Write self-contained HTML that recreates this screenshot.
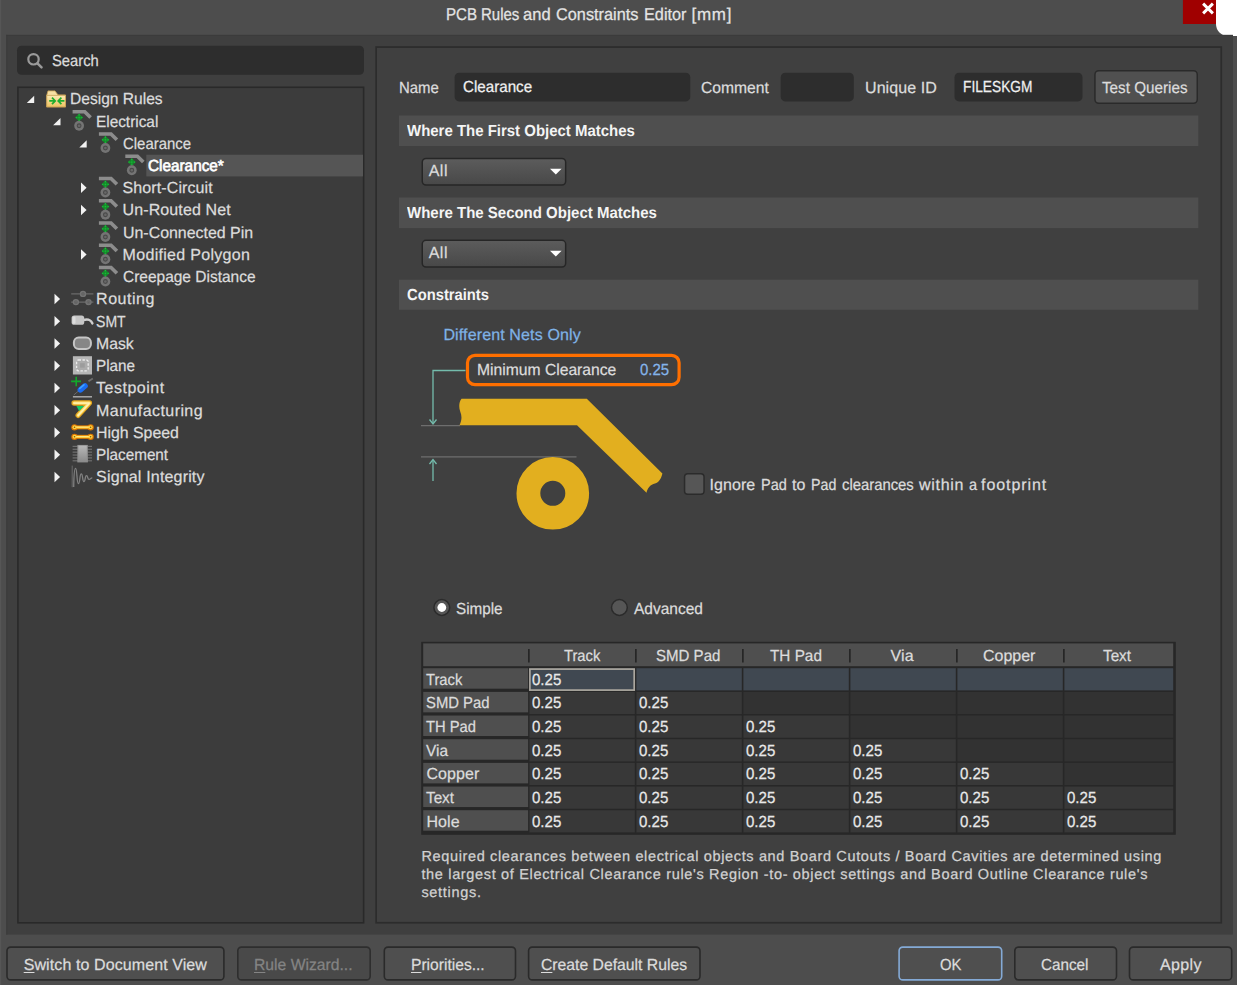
<!DOCTYPE html>
<html><head><meta charset="utf-8"><title>PCB Rules and Constraints Editor [mm]</title>
<style>
html,body{margin:0;padding:0}
body{width:1237px;height:985px;position:relative;overflow:hidden;background:#4d4d4d;font-family:"Liberation Sans",sans-serif;}
.a{position:absolute;box-sizing:border-box}
.t{position:absolute;transform-origin:0 0;line-height:20px;white-space:pre;text-rendering:geometricPrecision;-webkit-text-stroke:0.25px currentColor;}
.t u{text-decoration:underline;text-underline-offset:2px;text-decoration-thickness:1px}
.inp{background:#2d2d2d;border-radius:4px}
.sec{background:#4f4f4f;left:399px;width:799px}
.btn{background:#4f4f4f;border:1px solid #2a2a2a;border-radius:4px;top:946px;height:35px}
.dd{border:1px solid #262626;border-radius:4px;background:linear-gradient(#5b5b5b,#494949);left:421px;width:146px;height:29px}
.ar{width:0;height:0;border-left:6px solid transparent;border-right:6px solid transparent;border-top:6px solid #fff}
.tri{width:0;height:0;border-left:8px solid transparent;border-bottom:8px solid #f0f0f0}
.arr{width:0;height:0;border-top:5px solid transparent;border-bottom:5px solid transparent;border-left:6px solid #f0f0f0}
svg{position:absolute;overflow:visible}

</style></head>
<body>
<svg style="left:0;top:0" width="1237" height="985" viewBox="0 0 1237 985">
<defs><linearGradient id="ddg" x1="0" y1="0" x2="0" y2="1"><stop offset="0" stop-color="#5c5c5c"/><stop offset="1" stop-color="#484848"/></linearGradient></defs>
<rect x="0.00" y="0.00" width="1.20" height="985.00" rx="0.00" fill="#565656"/>
<rect x="1182.90" y="0.00" width="33.10" height="24.00" rx="0.00" fill="#a00000"/>
<path d="M1203.1 3.6 L1212.9 13.4 M1212.9 3.6 L1203.1 13.4" stroke="#fff" stroke-width="2.9" stroke-linecap="butt" fill="none"/>
<path d="M1216 0 H1237 V36 H1228 A12 12 0 0 1 1216 24 Z" fill="#fff"/>
<rect x="6.30" y="34.90" width="1226.60" height="899.70" rx="0.00" fill="#3f3f3f"/>
<rect x="6.30" y="34.90" width="1226.60" height="1.10" rx="0.00" fill="#3b3b3b"/>
<rect x="6.30" y="34.90" width="1.00" height="899.70" rx="0.00" fill="#3b3b3b"/>
<rect x="17.00" y="45.80" width="347.00" height="28.90" rx="4.50" fill="#2d2d2d"/>
<circle cx="33.5" cy="59.3" r="5.2" fill="none" stroke="#9a9a9a" stroke-width="2.2"/><path d="M37.5 63.3 L41.5 67.4" stroke="#9a9a9a" stroke-width="2.5" stroke-linecap="round"/>
<rect x="17.90" y="87.30" width="345.70" height="835.50" rx="0.00" fill="#3c3c3c" stroke="#292929" stroke-width="1.60"/>
<rect x="146.30" y="154.70" width="216.70" height="21.70" rx="0.00" fill="#555555"/>
<rect x="376.15" y="47.05" width="845.10" height="875.70" rx="0.00" fill="#404040" stroke="#2c2c2c" stroke-width="1.70"/>
<rect x="454.60" y="72.70" width="235.70" height="28.70" rx="4.50" fill="#2d2d2d"/>
<rect x="780.70" y="72.70" width="73.10" height="28.70" rx="4.50" fill="#2d2d2d"/>
<rect x="954.50" y="72.70" width="128.00" height="28.70" rx="4.50" fill="#2d2d2d"/>
<rect x="1094.95" y="70.75" width="102.30" height="32.60" rx="3.75" fill="#505050" stroke="#2a2a2a" stroke-width="1.50"/>
<rect x="399.00" y="115.50" width="799.30" height="30.50" rx="0.00" fill="#4f4f4f"/>
<rect x="399.00" y="197.50" width="799.30" height="30.60" rx="0.00" fill="#4f4f4f"/>
<rect x="399.00" y="279.70" width="799.30" height="30.10" rx="0.00" fill="#4f4f4f"/>
<rect x="422.25" y="158.45" width="143.40" height="26.50" rx="3.75" fill="url(#ddg)" stroke="#262626" stroke-width="1.50"/>
<path d="M550.0 168.70 H561.6 L555.8 174.60 Z" fill="#ffffff"/>
<rect x="422.25" y="240.35" width="143.40" height="26.60" rx="3.75" fill="url(#ddg)" stroke="#262626" stroke-width="1.50"/>
<path d="M550.0 250.65 H561.6 L555.8 256.55 Z" fill="#ffffff"/>
<rect x="684.55" y="473.65" width="19.50" height="20.60" rx="3.25" fill="#565656" stroke="#2b2b2b" stroke-width="1.50"/>
<circle cx="441.80" cy="607.5" r="7.9" fill="#565656" stroke="#2b2b2b" stroke-width="1.5"/>
<circle cx="619.40" cy="607.5" r="7.9" fill="#565656" stroke="#2b2b2b" stroke-width="1.5"/>
<circle cx="441.8" cy="607.5" r="4.4" fill="#ffffff"/>
<rect x="7.00" y="947.10" width="216.90" height="32.80" rx="3.70" fill="#4f4f4f" stroke="#2a2a2a" stroke-width="1.60"/>
<rect x="237.80" y="947.10" width="132.40" height="32.80" rx="3.70" fill="#494949" stroke="#2e2e2e" stroke-width="1.60"/>
<rect x="384.30" y="947.10" width="131.20" height="32.80" rx="3.70" fill="#4f4f4f" stroke="#2a2a2a" stroke-width="1.60"/>
<rect x="528.60" y="947.10" width="171.40" height="32.80" rx="3.70" fill="#4f4f4f" stroke="#2a2a2a" stroke-width="1.60"/>
<rect x="899.10" y="947.10" width="102.60" height="32.80" rx="3.70" fill="#4f4f4f" stroke="#84aad6" stroke-width="1.60"/>
<rect x="1014.80" y="947.10" width="101.70" height="32.80" rx="3.70" fill="#4f4f4f" stroke="#2a2a2a" stroke-width="1.60"/>
<rect x="1129.50" y="947.10" width="102.20" height="32.80" rx="3.70" fill="#4f4f4f" stroke="#2a2a2a" stroke-width="1.60"/>
</svg>
<!-- diagram -->
<svg style="left:0;top:0" width="1237" height="985" viewBox="0 0 1237 985">
 <g fill="none" stroke="#74bcac" stroke-width="1.3">
  <path d="M465.5 370.5 H433 V423"/>
  <path d="M429.5 419.5 L433 424 L436.5 419.5"/>
  <path d="M433 481 V460"/>
  <path d="M429.5 464 L433 459.5 L436.5 464"/>
 </g>
 <g stroke="#6e6e6e" stroke-width="1.2">
  <path d="M421 425.6 H460"/>
  <path d="M421 456.8 H576.5"/>
 </g>
 <path d="M461.5 398.8 H586.8 L662.4 473.6 C 661 479 659 482.5 655 483.5 C 650.5 484.5 647.5 488 646.5 492.8 L577 425.3 H459.5 C 462 420 462 416 460.2 411.5 C 458.6 407 459 402 461.5 398.8 Z" fill="#e2af1f"/>
 <circle cx="552.8" cy="493.3" r="24.4" fill="none" stroke="#e2af1f" stroke-width="23.8"/>
 <rect x="467.5" y="355.3" width="211.6" height="29.4" rx="7.5" fill="none" stroke="#ff6f00" stroke-width="3.2"/>
</svg>
<svg style="left:0;top:0" width="1237" height="985" viewBox="0 0 1237 985">
<rect x="421.20" y="641.80" width="754.60" height="193.00" fill="#272727"/>
<rect x="423.20" y="643.40" width="750.00" height="22.80" fill="#4f4f4f"/>
<rect x="528.00" y="649.00" width="1.70" height="13.50" fill="#262626"/>
<rect x="635.00" y="649.00" width="1.70" height="13.50" fill="#262626"/>
<rect x="742.00" y="649.00" width="1.70" height="13.50" fill="#262626"/>
<rect x="849.00" y="649.00" width="1.70" height="13.50" fill="#262626"/>
<rect x="956.00" y="649.00" width="1.70" height="13.50" fill="#262626"/>
<rect x="1063.00" y="649.00" width="1.70" height="13.50" fill="#262626"/>
<rect x="423.20" y="668.20" width="104.90" height="20.50" fill="#4f4f4f"/>
<rect x="529.40" y="668.20" width="105.40" height="22.20" fill="#404851"/>
<rect x="636.40" y="668.20" width="105.40" height="22.20" fill="#404851"/>
<rect x="743.40" y="668.20" width="105.40" height="22.20" fill="#404851"/>
<rect x="850.40" y="668.20" width="105.40" height="22.20" fill="#404851"/>
<rect x="957.40" y="668.20" width="105.40" height="22.20" fill="#404851"/>
<rect x="1064.40" y="668.20" width="108.80" height="22.20" fill="#404851"/>
<rect x="423.20" y="691.87" width="104.90" height="20.50" fill="#4f4f4f"/>
<rect x="529.40" y="691.87" width="105.40" height="22.20" fill="#383838"/>
<rect x="636.40" y="691.87" width="105.40" height="22.20" fill="#383838"/>
<rect x="743.40" y="691.87" width="105.40" height="22.20" fill="#323232"/>
<rect x="850.40" y="691.87" width="105.40" height="22.20" fill="#323232"/>
<rect x="957.40" y="691.87" width="105.40" height="22.20" fill="#323232"/>
<rect x="1064.40" y="691.87" width="108.80" height="22.20" fill="#323232"/>
<rect x="423.20" y="715.54" width="104.90" height="20.50" fill="#4f4f4f"/>
<rect x="529.40" y="715.54" width="105.40" height="22.20" fill="#383838"/>
<rect x="636.40" y="715.54" width="105.40" height="22.20" fill="#383838"/>
<rect x="743.40" y="715.54" width="105.40" height="22.20" fill="#383838"/>
<rect x="850.40" y="715.54" width="105.40" height="22.20" fill="#323232"/>
<rect x="957.40" y="715.54" width="105.40" height="22.20" fill="#323232"/>
<rect x="1064.40" y="715.54" width="108.80" height="22.20" fill="#323232"/>
<rect x="423.20" y="739.21" width="104.90" height="20.50" fill="#4f4f4f"/>
<rect x="529.40" y="739.21" width="105.40" height="22.20" fill="#383838"/>
<rect x="636.40" y="739.21" width="105.40" height="22.20" fill="#383838"/>
<rect x="743.40" y="739.21" width="105.40" height="22.20" fill="#383838"/>
<rect x="850.40" y="739.21" width="105.40" height="22.20" fill="#383838"/>
<rect x="957.40" y="739.21" width="105.40" height="22.20" fill="#323232"/>
<rect x="1064.40" y="739.21" width="108.80" height="22.20" fill="#323232"/>
<rect x="423.20" y="762.88" width="104.90" height="20.50" fill="#4f4f4f"/>
<rect x="529.40" y="762.88" width="105.40" height="22.20" fill="#383838"/>
<rect x="636.40" y="762.88" width="105.40" height="22.20" fill="#383838"/>
<rect x="743.40" y="762.88" width="105.40" height="22.20" fill="#383838"/>
<rect x="850.40" y="762.88" width="105.40" height="22.20" fill="#383838"/>
<rect x="957.40" y="762.88" width="105.40" height="22.20" fill="#383838"/>
<rect x="1064.40" y="762.88" width="108.80" height="22.20" fill="#323232"/>
<rect x="423.20" y="786.55" width="104.90" height="20.50" fill="#4f4f4f"/>
<rect x="529.40" y="786.55" width="105.40" height="22.20" fill="#383838"/>
<rect x="636.40" y="786.55" width="105.40" height="22.20" fill="#383838"/>
<rect x="743.40" y="786.55" width="105.40" height="22.20" fill="#383838"/>
<rect x="850.40" y="786.55" width="105.40" height="22.20" fill="#383838"/>
<rect x="957.40" y="786.55" width="105.40" height="22.20" fill="#383838"/>
<rect x="1064.40" y="786.55" width="108.80" height="22.20" fill="#383838"/>
<rect x="423.20" y="810.22" width="104.90" height="20.50" fill="#4f4f4f"/>
<rect x="529.40" y="810.22" width="105.40" height="22.20" fill="#383838"/>
<rect x="636.40" y="810.22" width="105.40" height="22.20" fill="#383838"/>
<rect x="743.40" y="810.22" width="105.40" height="22.20" fill="#383838"/>
<rect x="850.40" y="810.22" width="105.40" height="22.20" fill="#383838"/>
<rect x="957.40" y="810.22" width="105.40" height="22.20" fill="#383838"/>
<rect x="1064.40" y="810.22" width="108.80" height="22.20" fill="#383838"/>
<rect x="529.9" y="669.10" width="104.3" height="21" fill="none" stroke="#aba79f" stroke-width="1.7"/>
</svg>
<svg style="left:0;top:0" width="1237" height="985" viewBox="0 0 1237 985">
<path d="M26.80 103.10 H34.20 V95.70 Z" fill="#f2f2f2"/>
<defs><linearGradient id="fg" x1="0" y1="0" x2="0" y2="1"><stop offset="0" stop-color="#fbe9b4"/><stop offset="1" stop-color="#eec462"/></linearGradient></defs><path d="M46.80 95.10 L48.00 90.90 H55.00 L58.00 94.90 H65.40 V106.90 H46.80 Z" fill="#f6dfa4" stroke="#caa256" stroke-width="0.8"/><rect x="46.80" y="95.30" width="18.6" height="11.6" fill="url(#fg)" stroke="#caa256" stroke-width="0.8"/><path d="M49.20 100.90 H55.00 M52.00 97.70 L55.20 100.90 L52.00 104.10" fill="none" stroke="#1fae2e" stroke-width="1.7"/><path d="M64.40 100.90 H58.40 M61.40 97.70 L58.20 100.90 L61.40 104.10" fill="none" stroke="#1fae2e" stroke-width="1.7"/>
<path d="M53.10 125.35 H60.50 V117.95 Z" fill="#f2f2f2"/>
<path d="M72.60 111.75 H84.70 L90.60 117.55" fill="none" stroke="#8c8c8c" stroke-width="3.7" stroke-linejoin="miter"/><path d="M75.20 117.55 L79.10 113.65 L83.00 117.55 L79.10 121.45 Z" fill="#17922d"/><circle cx="76.30" cy="117.55" r="0.65" fill="#14c83a"/><circle cx="81.90" cy="117.55" r="0.65" fill="#14c83a"/><circle cx="79.10" cy="114.75" r="0.65" fill="#14c83a"/><circle cx="79.10" cy="120.35" r="0.65" fill="#14c83a"/><circle cx="79.10" cy="117.55" r="0.65" fill="#14c83a"/><circle cx="77.70" cy="116.15" r="0.5" fill="#0f7a24"/><circle cx="80.50" cy="116.15" r="0.5" fill="#0f7a24"/><circle cx="77.70" cy="118.95" r="0.5" fill="#0f7a24"/><circle cx="80.50" cy="118.95" r="0.5" fill="#0f7a24"/><circle cx="79.10" cy="125.75" r="4.9" fill="#747474"/><circle cx="79.10" cy="125.75" r="1.9" fill="#686868" stroke="#4a4a4a" stroke-width="1.1"/>
<path d="M79.30 147.60 H86.70 V140.20 Z" fill="#f2f2f2"/>
<path d="M98.90 134.00 H111.00 L116.90 139.80" fill="none" stroke="#8c8c8c" stroke-width="3.7" stroke-linejoin="miter"/><path d="M101.50 139.80 L105.40 135.90 L109.30 139.80 L105.40 143.70 Z" fill="#17922d"/><circle cx="102.60" cy="139.80" r="0.65" fill="#14c83a"/><circle cx="108.20" cy="139.80" r="0.65" fill="#14c83a"/><circle cx="105.40" cy="137.00" r="0.65" fill="#14c83a"/><circle cx="105.40" cy="142.60" r="0.65" fill="#14c83a"/><circle cx="105.40" cy="139.80" r="0.65" fill="#14c83a"/><circle cx="104.00" cy="138.40" r="0.5" fill="#0f7a24"/><circle cx="106.80" cy="138.40" r="0.5" fill="#0f7a24"/><circle cx="104.00" cy="141.20" r="0.5" fill="#0f7a24"/><circle cx="106.80" cy="141.20" r="0.5" fill="#0f7a24"/><circle cx="105.40" cy="148.00" r="4.9" fill="#747474"/><circle cx="105.40" cy="148.00" r="1.9" fill="#686868" stroke="#4a4a4a" stroke-width="1.1"/>
<path d="M125.30 156.25 H137.40 L143.30 162.05" fill="none" stroke="#8c8c8c" stroke-width="3.7" stroke-linejoin="miter"/><path d="M127.90 162.05 L131.80 158.15 L135.70 162.05 L131.80 165.95 Z" fill="#17922d"/><circle cx="129.00" cy="162.05" r="0.65" fill="#14c83a"/><circle cx="134.60" cy="162.05" r="0.65" fill="#14c83a"/><circle cx="131.80" cy="159.25" r="0.65" fill="#14c83a"/><circle cx="131.80" cy="164.85" r="0.65" fill="#14c83a"/><circle cx="131.80" cy="162.05" r="0.65" fill="#14c83a"/><circle cx="130.40" cy="160.65" r="0.5" fill="#0f7a24"/><circle cx="133.20" cy="160.65" r="0.5" fill="#0f7a24"/><circle cx="130.40" cy="163.45" r="0.5" fill="#0f7a24"/><circle cx="133.20" cy="163.45" r="0.5" fill="#0f7a24"/><circle cx="131.80" cy="170.25" r="4.9" fill="#747474"/><circle cx="131.80" cy="170.25" r="1.9" fill="#686868" stroke="#4a4a4a" stroke-width="1.1"/>
<path d="M81.00 182.60 L86.60 187.80 L81.00 193.00 Z" fill="#f2f2f2"/>
<path d="M98.90 178.50 H111.00 L116.90 184.30" fill="none" stroke="#8c8c8c" stroke-width="3.7" stroke-linejoin="miter"/><path d="M101.50 184.30 L105.40 180.40 L109.30 184.30 L105.40 188.20 Z" fill="#17922d"/><circle cx="102.60" cy="184.30" r="0.65" fill="#14c83a"/><circle cx="108.20" cy="184.30" r="0.65" fill="#14c83a"/><circle cx="105.40" cy="181.50" r="0.65" fill="#14c83a"/><circle cx="105.40" cy="187.10" r="0.65" fill="#14c83a"/><circle cx="105.40" cy="184.30" r="0.65" fill="#14c83a"/><circle cx="104.00" cy="182.90" r="0.5" fill="#0f7a24"/><circle cx="106.80" cy="182.90" r="0.5" fill="#0f7a24"/><circle cx="104.00" cy="185.70" r="0.5" fill="#0f7a24"/><circle cx="106.80" cy="185.70" r="0.5" fill="#0f7a24"/><circle cx="105.40" cy="192.50" r="4.9" fill="#747474"/><circle cx="105.40" cy="192.50" r="1.9" fill="#686868" stroke="#4a4a4a" stroke-width="1.1"/>
<path d="M81.00 204.85 L86.60 210.05 L81.00 215.25 Z" fill="#f2f2f2"/>
<path d="M98.90 200.75 H111.00 L116.90 206.55" fill="none" stroke="#8c8c8c" stroke-width="3.7" stroke-linejoin="miter"/><path d="M101.50 206.55 L105.40 202.65 L109.30 206.55 L105.40 210.45 Z" fill="#17922d"/><circle cx="102.60" cy="206.55" r="0.65" fill="#14c83a"/><circle cx="108.20" cy="206.55" r="0.65" fill="#14c83a"/><circle cx="105.40" cy="203.75" r="0.65" fill="#14c83a"/><circle cx="105.40" cy="209.35" r="0.65" fill="#14c83a"/><circle cx="105.40" cy="206.55" r="0.65" fill="#14c83a"/><circle cx="104.00" cy="205.15" r="0.5" fill="#0f7a24"/><circle cx="106.80" cy="205.15" r="0.5" fill="#0f7a24"/><circle cx="104.00" cy="207.95" r="0.5" fill="#0f7a24"/><circle cx="106.80" cy="207.95" r="0.5" fill="#0f7a24"/><circle cx="105.40" cy="214.75" r="4.9" fill="#747474"/><circle cx="105.40" cy="214.75" r="1.9" fill="#686868" stroke="#4a4a4a" stroke-width="1.1"/>
<path d="M98.90 223.00 H111.00 L116.90 228.80" fill="none" stroke="#8c8c8c" stroke-width="3.7" stroke-linejoin="miter"/><path d="M101.50 228.80 L105.40 224.90 L109.30 228.80 L105.40 232.70 Z" fill="#17922d"/><circle cx="102.60" cy="228.80" r="0.65" fill="#14c83a"/><circle cx="108.20" cy="228.80" r="0.65" fill="#14c83a"/><circle cx="105.40" cy="226.00" r="0.65" fill="#14c83a"/><circle cx="105.40" cy="231.60" r="0.65" fill="#14c83a"/><circle cx="105.40" cy="228.80" r="0.65" fill="#14c83a"/><circle cx="104.00" cy="227.40" r="0.5" fill="#0f7a24"/><circle cx="106.80" cy="227.40" r="0.5" fill="#0f7a24"/><circle cx="104.00" cy="230.20" r="0.5" fill="#0f7a24"/><circle cx="106.80" cy="230.20" r="0.5" fill="#0f7a24"/><circle cx="105.40" cy="237.00" r="4.9" fill="#747474"/><circle cx="105.40" cy="237.00" r="1.9" fill="#686868" stroke="#4a4a4a" stroke-width="1.1"/>
<path d="M81.00 249.35 L86.60 254.55 L81.00 259.75 Z" fill="#f2f2f2"/>
<path d="M98.90 245.25 H111.00 L116.90 251.05" fill="none" stroke="#8c8c8c" stroke-width="3.7" stroke-linejoin="miter"/><path d="M101.50 251.05 L105.40 247.15 L109.30 251.05 L105.40 254.95 Z" fill="#17922d"/><circle cx="102.60" cy="251.05" r="0.65" fill="#14c83a"/><circle cx="108.20" cy="251.05" r="0.65" fill="#14c83a"/><circle cx="105.40" cy="248.25" r="0.65" fill="#14c83a"/><circle cx="105.40" cy="253.85" r="0.65" fill="#14c83a"/><circle cx="105.40" cy="251.05" r="0.65" fill="#14c83a"/><circle cx="104.00" cy="249.65" r="0.5" fill="#0f7a24"/><circle cx="106.80" cy="249.65" r="0.5" fill="#0f7a24"/><circle cx="104.00" cy="252.45" r="0.5" fill="#0f7a24"/><circle cx="106.80" cy="252.45" r="0.5" fill="#0f7a24"/><circle cx="105.40" cy="259.25" r="4.9" fill="#747474"/><circle cx="105.40" cy="259.25" r="1.9" fill="#686868" stroke="#4a4a4a" stroke-width="1.1"/>
<path d="M98.90 267.50 H111.00 L116.90 273.30" fill="none" stroke="#8c8c8c" stroke-width="3.7" stroke-linejoin="miter"/><path d="M101.50 273.30 L105.40 269.40 L109.30 273.30 L105.40 277.20 Z" fill="#17922d"/><circle cx="102.60" cy="273.30" r="0.65" fill="#14c83a"/><circle cx="108.20" cy="273.30" r="0.65" fill="#14c83a"/><circle cx="105.40" cy="270.50" r="0.65" fill="#14c83a"/><circle cx="105.40" cy="276.10" r="0.65" fill="#14c83a"/><circle cx="105.40" cy="273.30" r="0.65" fill="#14c83a"/><circle cx="104.00" cy="271.90" r="0.5" fill="#0f7a24"/><circle cx="106.80" cy="271.90" r="0.5" fill="#0f7a24"/><circle cx="104.00" cy="274.70" r="0.5" fill="#0f7a24"/><circle cx="106.80" cy="274.70" r="0.5" fill="#0f7a24"/><circle cx="105.40" cy="281.50" r="4.9" fill="#747474"/><circle cx="105.40" cy="281.50" r="1.9" fill="#686868" stroke="#4a4a4a" stroke-width="1.1"/>
<path d="M54.50 293.85 L60.10 299.05 L54.50 304.25 Z" fill="#f2f2f2"/>
<path d="M71.20 293.90 H93.40 M71.20 302.10 H93.40" stroke="#6a6a6a" stroke-width="1.2" fill="none"/><circle cx="83.00" cy="293.90" r="3.2" fill="#747474"/><circle cx="83.00" cy="293.90" r="1.5" fill="none" stroke="#626262" stroke-width="0.8"/><circle cx="83.00" cy="293.90" r="0.7" fill="#555555"/><circle cx="75.90" cy="302.10" r="3.2" fill="#747474"/><circle cx="75.90" cy="302.10" r="1.5" fill="none" stroke="#626262" stroke-width="0.8"/><circle cx="75.90" cy="302.10" r="0.7" fill="#555555"/><circle cx="88.50" cy="302.10" r="3.2" fill="#747474"/><circle cx="88.50" cy="302.10" r="1.5" fill="none" stroke="#626262" stroke-width="0.8"/><circle cx="88.50" cy="302.10" r="0.7" fill="#555555"/>
<path d="M54.50 316.10 L60.10 321.30 L54.50 326.50 Z" fill="#f2f2f2"/>
<path d="M83.60 320.00 C 88.80 318.60 90.80 320.20 92.40 323.40" fill="none" stroke="#cecece" stroke-width="2.4" stroke-linecap="round"/><rect x="71.60" y="315.40" width="12.6" height="9.4" rx="2.6" fill="#c6c6c6"/><rect x="72.50" y="316.50" width="3.0" height="7.2" rx="1.2" fill="#dcdcdc"/>
<path d="M54.50 338.35 L60.10 343.55 L54.50 348.75 Z" fill="#f2f2f2"/>
<rect x="73.90" y="337.50" width="17.0" height="11.5" rx="4.8" fill="#868686" stroke="#c6c6c6" stroke-width="2.0"/>
<path d="M54.50 360.60 L60.10 365.80 L54.50 371.00 Z" fill="#f2f2f2"/>
<rect x="72.90" y="356.20" width="19.1" height="18.3" fill="#b6b6b6"/><rect x="76.60" y="360.00" width="11.6" height="10.8" rx="2" fill="#acacac" stroke="#ececec" stroke-width="1.3" stroke-dasharray="2.4 1.5"/><rect x="80.10" y="363.20" width="4.6" height="4.4" fill="#9c9c9c"/>
<path d="M54.50 382.85 L60.10 388.05 L54.50 393.25 Z" fill="#f2f2f2"/>
<path d="M71.10 381.40 H81.00 M76.20 376.65 V386.25" stroke="#12a82a" stroke-width="1.6" fill="none"/><path d="M88.50 381.25 L92.80 378.45" stroke="#6e6e6e" stroke-width="1.8" fill="none"/><path d="M73.80 394.95 L79.20 390.35" stroke="#707070" stroke-width="0.9" fill="none"/><path d="M80.40 389.85 L85.00 385.95" stroke="#1b6cf0" stroke-width="5.6" stroke-linecap="round" fill="none"/><path d="M79.80 388.45 L84.00 384.85" stroke="#3ea4ff" stroke-width="1.6" stroke-linecap="round" fill="none"/><path d="M72.90 396.80 H92.00" stroke="#b0b0b0" stroke-width="1.4" fill="none"/>
<path d="M54.50 405.10 L60.10 410.30 L54.50 415.50 Z" fill="#f2f2f2"/>
<path d="M74.10 403.05 H89.40 L78.20 415.30" fill="none" stroke="#e2a41c" stroke-width="5.4" stroke-linecap="round" stroke-linejoin="round"/><path d="M74.10 403.05 H89.40 L78.20 415.30" fill="none" stroke="#ffe278" stroke-width="3.0" stroke-linecap="round" stroke-linejoin="round"/><path d="M74.10 403.05 H89.40 L78.20 415.30" fill="none" stroke="#fff3b8" stroke-width="1.2" stroke-linecap="round" stroke-linejoin="round"/><path d="M76.40 405.90 H84.10 L79.10 411.00 Z" fill="#12cc68"/>
<path d="M54.50 427.35 L60.10 432.55 L54.50 437.75 Z" fill="#f2f2f2"/>
<path d="M74.50 427.35 H90.60" stroke="#e07a00" stroke-width="4.0" fill="none"/><circle cx="74.50" cy="427.35" r="3.2" fill="#dc7400"/><circle cx="90.60" cy="427.35" r="3.2" fill="#dc7400"/><path d="M74.50 427.35 H90.60" stroke="#ffc62e" stroke-width="2.3" fill="none"/><path d="M76.00 427.15 H89.10" stroke="#fff0a0" stroke-width="0.9" fill="none"/><circle cx="74.50" cy="427.35" r="2.0" fill="#ffd242"/><circle cx="74.50" cy="427.35" r="0.75" fill="#7a5a10"/><circle cx="90.60" cy="427.35" r="2.0" fill="#ffd242"/><circle cx="90.60" cy="427.35" r="0.75" fill="#7a5a10"/><path d="M74.50 436.85 H90.60" stroke="#e07a00" stroke-width="4.0" fill="none"/><circle cx="74.50" cy="436.85" r="3.2" fill="#dc7400"/><circle cx="90.60" cy="436.85" r="3.2" fill="#dc7400"/><path d="M74.50 436.85 H90.60" stroke="#ffc62e" stroke-width="2.3" fill="none"/><path d="M76.00 436.65 H89.10" stroke="#fff0a0" stroke-width="0.9" fill="none"/><circle cx="74.50" cy="436.85" r="2.0" fill="#ffd242"/><circle cx="74.50" cy="436.85" r="0.75" fill="#7a5a10"/><circle cx="90.60" cy="436.85" r="2.0" fill="#ffd242"/><circle cx="90.60" cy="436.85" r="0.75" fill="#7a5a10"/>
<path d="M54.50 449.60 L60.10 454.80 L54.50 460.00 Z" fill="#f2f2f2"/>
<defs><linearGradient id="pg" x1="0" y1="0" x2="0" y2="1"><stop offset="0" stop-color="#b8b8b8"/><stop offset="1" stop-color="#8a8a8a"/></linearGradient></defs><path d="M72.60 446.40 H92.00" stroke="#707070" stroke-width="1.2"/><path d="M72.60 449.28 H92.00" stroke="#707070" stroke-width="1.2"/><path d="M72.60 452.16 H92.00" stroke="#707070" stroke-width="1.2"/><path d="M72.60 455.04 H92.00" stroke="#707070" stroke-width="1.2"/><path d="M72.60 457.92 H92.00" stroke="#707070" stroke-width="1.2"/><path d="M72.60 460.80 H92.00" stroke="#707070" stroke-width="1.2"/><rect x="77.30" y="444.90" width="10.6" height="17.5" fill="#8e8e8e"/><rect x="78.40" y="445.70" width="8.4" height="16.0" fill="url(#pg)"/>
<path d="M54.50 471.85 L60.10 477.05 L54.50 482.25 Z" fill="#f2f2f2"/>
<path d="M72.20 465.60 V487.20" stroke="#6c6c6c" stroke-width="1.0" fill="none"/><path d="M73.70 487.00 C73.90 475.00 74.20 468.40 75.50 468.40 C77.30 468.40 76.60 483.60 78.40 483.60 C80.20 483.60 79.50 473.80 81.30 473.80 C82.91 473.80 82.29 481.60 83.90 481.60 C85.51 481.60 84.89 475.70 86.50 475.70 C87.99 475.70 87.41 479.30 88.90 479.30 C91.01 479.30 90.19 477.80 92.30 477.80" stroke="#828282" stroke-width="1.3" fill="none" stroke-linejoin="round"/>
</svg>

<!-- text -->
<span class="t" style="left:445.7px;top:5.0px;font-size:17px;transform:scaleX(0.8894);color:#e4e4e4">PCB</span>
<span class="t" style="left:481.1px;top:5.0px;font-size:17px;transform:scaleX(0.8811);color:#e4e4e4">Rules</span>
<span class="t" style="left:523.3px;top:5.0px;font-size:17px;transform:scaleX(0.9727);color:#e4e4e4">and</span>
<span class="t" style="left:556.4px;top:5.0px;font-size:17px;transform:scaleX(0.9583);color:#e4e4e4">Constraints</span>
<span class="t" style="left:643.7px;top:5.0px;font-size:17px;transform:scaleX(0.9567);color:#e4e4e4">Editor</span>
<span class="t" style="left:691.4px;top:5.0px;font-size:17px;letter-spacing:0.773px;color:#e4e4e4">[mm]</span>
<span class="t" style="left:51.8px;top:52.0px;font-size:16px;transform:scaleX(0.9230);color:#dcdcdc">Search</span>
<span class="t" style="left:69.8px;top:90.0px;font-size:16px;transform:scaleX(0.9731);color:#dcdcdc">Design Rules</span>
<span class="t" style="left:96.4px;top:113.0px;font-size:16px;transform:scaleX(0.9598);color:#dcdcdc">Electrical</span>
<span class="t" style="left:123.2px;top:135.0px;font-size:16px;transform:scaleX(0.9323);color:#dcdcdc">Clearance</span>
<span class="t" style="left:147.9px;top:157.0px;font-size:16px;transform:scaleX(0.9576);color:#ffffff;-webkit-text-stroke:0.65px currentColor">Clearance*</span>
<span class="t" style="left:122.6px;top:179.0px;font-size:16px;letter-spacing:0.099px;color:#dcdcdc">Short-Circuit</span>
<span class="t" style="left:122.6px;top:201.0px;font-size:16px;letter-spacing:0.107px;color:#dcdcdc">Un-Routed Net</span>
<span class="t" style="left:122.6px;top:224.0px;font-size:16px;transform:scaleX(0.9950);color:#dcdcdc">Un-Connected Pin</span>
<span class="t" style="left:122.6px;top:246.0px;font-size:16px;letter-spacing:0.303px;color:#dcdcdc">Modified Polygon</span>
<span class="t" style="left:122.6px;top:268.0px;font-size:16px;transform:scaleX(0.9674);color:#dcdcdc">Creepage Distance</span>
<span class="t" style="left:96.1px;top:290.0px;font-size:16px;letter-spacing:0.507px;color:#dcdcdc">Routing</span>
<span class="t" style="left:96.1px;top:313.0px;font-size:16px;transform:scaleX(0.8792);color:#dcdcdc">SMT</span>
<span class="t" style="left:96.1px;top:335.0px;font-size:16px;transform:scaleX(0.9860);color:#dcdcdc">Mask</span>
<span class="t" style="left:96.1px;top:357.0px;font-size:16px;transform:scaleX(0.9530);color:#dcdcdc">Plane</span>
<span class="t" style="left:96.1px;top:379.0px;font-size:16px;letter-spacing:0.494px;color:#dcdcdc">Testpoint</span>
<span class="t" style="left:96.1px;top:402.0px;font-size:16px;letter-spacing:0.426px;color:#dcdcdc">Manufacturing</span>
<span class="t" style="left:96.1px;top:424.0px;font-size:16px;transform:scaleX(0.9913);color:#dcdcdc">High Speed</span>
<span class="t" style="left:96.1px;top:446.0px;font-size:16px;transform:scaleX(0.9538);color:#dcdcdc">Placement</span>
<span class="t" style="left:96.1px;top:468.0px;font-size:16px;letter-spacing:0.170px;color:#dcdcdc">Signal Integrity</span>
<span class="t" style="left:399.0px;top:79.0px;font-size:16px;transform:scaleX(0.9324);color:#dcdcdc">Name</span>
<span class="t" style="left:462.6px;top:78.0px;font-size:16px;transform:scaleX(0.9474);color:#f0f0f0">Clearance</span>
<span class="t" style="left:701.4px;top:79.0px;font-size:16px;transform:scaleX(0.9790);color:#dcdcdc">Comment</span>
<span class="t" style="left:865.0px;top:79.0px;font-size:16px;letter-spacing:0.080px;color:#dcdcdc">Unique ID</span>
<span class="t" style="left:962.6px;top:78.0px;font-size:16px;transform:scaleX(0.8578);color:#f0f0f0">FILESKGM</span>
<span class="t" style="left:1102.4px;top:79.0px;font-size:16px;transform:scaleX(0.9520);color:#dcdcdc">Test Queries</span>
<span class="t" style="left:406.8px;top:122.0px;font-size:16px;transform:scaleX(0.9355);color:#f4f4f4;font-weight:bold;-webkit-text-stroke:0">Where The First Object Matches</span>
<span class="t" style="left:406.9px;top:204.0px;font-size:16px;transform:scaleX(0.9369);color:#f4f4f4;font-weight:bold;-webkit-text-stroke:0">Where The Second Object Matches</span>
<span class="t" style="left:406.9px;top:286.0px;font-size:16px;transform:scaleX(0.9223);color:#f4f4f4;font-weight:bold;-webkit-text-stroke:0">Constraints</span>
<span class="t" style="left:428.7px;top:162.0px;font-size:16px;letter-spacing:0.509px;color:#dcdcdc">All</span>
<span class="t" style="left:428.7px;top:244.0px;font-size:16px;letter-spacing:0.509px;color:#dcdcdc">All</span>
<span class="t" style="left:443.4px;top:326.0px;font-size:16px;letter-spacing:0.135px;color:#7fb2e6">Different Nets Only</span>
<span class="t" style="left:476.5px;top:361.0px;font-size:16px;transform:scaleX(0.9792);color:#dcdcdc">Minimum Clearance</span>
<span class="t" style="left:640.0px;top:361.0px;font-size:16px;transform:scaleX(0.9345);color:#84b4ea">0.25</span>
<span class="t" style="left:709.6px;top:476.0px;font-size:16px;letter-spacing:0.045px;color:#dcdcdc">Ignore</span>
<span class="t" style="left:761.4px;top:476.0px;font-size:16px;transform:scaleX(0.9063);color:#dcdcdc">Pad</span>
<span class="t" style="left:791.9px;top:476.0px;font-size:16px;letter-spacing:0.056px;color:#dcdcdc">to</span>
<span class="t" style="left:811.4px;top:476.0px;font-size:16px;transform:scaleX(0.8887);color:#dcdcdc">Pad</span>
<span class="t" style="left:842.0px;top:476.0px;font-size:16px;transform:scaleX(0.9279);color:#dcdcdc">clearances</span>
<span class="t" style="left:919.1px;top:476.0px;font-size:16px;letter-spacing:0.659px;color:#dcdcdc">within</span>
<span class="t" style="left:969.2px;top:476.0px;font-size:16px;transform:scaleX(0.9095);color:#dcdcdc">a</span>
<span class="t" style="left:981.1px;top:476.0px;font-size:16px;letter-spacing:0.911px;color:#dcdcdc">footprint</span>
<span class="t" style="left:455.8px;top:600.0px;font-size:16px;transform:scaleX(0.9528);color:#dcdcdc">Simple</span>
<span class="t" style="left:633.6px;top:600.0px;font-size:16px;transform:scaleX(0.9681);color:#dcdcdc">Advanced</span>
<span class="t" style="left:563.7px;top:647.0px;font-size:16px;transform:scaleX(0.9212);color:#dcdcdc">Track</span>
<span class="t" style="left:656.4px;top:647.0px;font-size:16px;transform:scaleX(0.9406);color:#dcdcdc">SMD Pad</span>
<span class="t" style="left:769.5px;top:647.0px;font-size:16px;transform:scaleX(0.9567);color:#dcdcdc">TH Pad</span>
<span class="t" style="left:890.5px;top:647.0px;font-size:16px;letter-spacing:0.128px;color:#dcdcdc">Via</span>
<span class="t" style="left:983.1px;top:647.0px;font-size:16px;transform:scaleX(0.9984);color:#dcdcdc">Copper</span>
<span class="t" style="left:1103.2px;top:647.0px;font-size:16px;transform:scaleX(0.9542);color:#dcdcdc">Text</span>
<span class="t" style="left:426.4px;top:671.0px;font-size:16px;transform:scaleX(0.9212);color:#dcdcdc">Track</span>
<span class="t" style="left:531.6px;top:671.0px;font-size:16px;transform:scaleX(0.9409);color:#e8e8e8">0.25</span>
<span class="t" style="left:426.4px;top:694.0px;font-size:16px;transform:scaleX(0.9274);color:#dcdcdc">SMD Pad</span>
<span class="t" style="left:531.6px;top:694.0px;font-size:16px;transform:scaleX(0.9409);color:#e8e8e8">0.25</span>
<span class="t" style="left:638.6px;top:694.0px;font-size:16px;transform:scaleX(0.9409);color:#e8e8e8">0.25</span>
<span class="t" style="left:426.4px;top:718.0px;font-size:16px;transform:scaleX(0.9217);color:#dcdcdc">TH Pad</span>
<span class="t" style="left:531.6px;top:718.0px;font-size:16px;transform:scaleX(0.9409);color:#e8e8e8">0.25</span>
<span class="t" style="left:638.6px;top:718.0px;font-size:16px;transform:scaleX(0.9409);color:#e8e8e8">0.25</span>
<span class="t" style="left:745.6px;top:718.0px;font-size:16px;transform:scaleX(0.9409);color:#e8e8e8">0.25</span>
<span class="t" style="left:426.4px;top:742.0px;font-size:16px;transform:scaleX(0.9631);color:#dcdcdc">Via</span>
<span class="t" style="left:531.6px;top:742.0px;font-size:16px;transform:scaleX(0.9409);color:#e8e8e8">0.25</span>
<span class="t" style="left:638.6px;top:742.0px;font-size:16px;transform:scaleX(0.9409);color:#e8e8e8">0.25</span>
<span class="t" style="left:745.6px;top:742.0px;font-size:16px;transform:scaleX(0.9409);color:#e8e8e8">0.25</span>
<span class="t" style="left:852.6px;top:742.0px;font-size:16px;transform:scaleX(0.9409);color:#e8e8e8">0.25</span>
<span class="t" style="left:426.4px;top:765.0px;font-size:16px;letter-spacing:0.103px;color:#dcdcdc">Copper</span>
<span class="t" style="left:531.6px;top:765.0px;font-size:16px;transform:scaleX(0.9409);color:#e8e8e8">0.25</span>
<span class="t" style="left:638.6px;top:765.0px;font-size:16px;transform:scaleX(0.9409);color:#e8e8e8">0.25</span>
<span class="t" style="left:745.6px;top:765.0px;font-size:16px;transform:scaleX(0.9409);color:#e8e8e8">0.25</span>
<span class="t" style="left:852.6px;top:765.0px;font-size:16px;transform:scaleX(0.9409);color:#e8e8e8">0.25</span>
<span class="t" style="left:959.6px;top:765.0px;font-size:16px;transform:scaleX(0.9409);color:#e8e8e8">0.25</span>
<span class="t" style="left:426.4px;top:789.0px;font-size:16px;transform:scaleX(0.9542);color:#dcdcdc">Text</span>
<span class="t" style="left:531.6px;top:789.0px;font-size:16px;transform:scaleX(0.9409);color:#e8e8e8">0.25</span>
<span class="t" style="left:638.6px;top:789.0px;font-size:16px;transform:scaleX(0.9409);color:#e8e8e8">0.25</span>
<span class="t" style="left:745.6px;top:789.0px;font-size:16px;transform:scaleX(0.9409);color:#e8e8e8">0.25</span>
<span class="t" style="left:852.6px;top:789.0px;font-size:16px;transform:scaleX(0.9409);color:#e8e8e8">0.25</span>
<span class="t" style="left:959.6px;top:789.0px;font-size:16px;transform:scaleX(0.9409);color:#e8e8e8">0.25</span>
<span class="t" style="left:1066.6px;top:789.0px;font-size:16px;transform:scaleX(0.9409);color:#e8e8e8">0.25</span>
<span class="t" style="left:426.4px;top:813.0px;font-size:16px;letter-spacing:0.131px;color:#dcdcdc">Hole</span>
<span class="t" style="left:531.6px;top:813.0px;font-size:16px;transform:scaleX(0.9409);color:#e8e8e8">0.25</span>
<span class="t" style="left:638.6px;top:813.0px;font-size:16px;transform:scaleX(0.9409);color:#e8e8e8">0.25</span>
<span class="t" style="left:745.6px;top:813.0px;font-size:16px;transform:scaleX(0.9409);color:#e8e8e8">0.25</span>
<span class="t" style="left:852.6px;top:813.0px;font-size:16px;transform:scaleX(0.9409);color:#e8e8e8">0.25</span>
<span class="t" style="left:959.6px;top:813.0px;font-size:16px;transform:scaleX(0.9409);color:#e8e8e8">0.25</span>
<span class="t" style="left:1066.6px;top:813.0px;font-size:16px;transform:scaleX(0.9409);color:#e8e8e8">0.25</span>
<span class="t" style="left:421.4px;top:847.0px;font-size:14.5px;letter-spacing:0.647px;color:#d2d2d2">Required clearances between electrical objects and Board Cutouts / Board Cavities are determined using</span>
<span class="t" style="left:421.4px;top:865.0px;font-size:14.5px;letter-spacing:0.666px;color:#d2d2d2">the largest of Electrical Clearance rule's Region -to- object settings and Board Outline Clearance rule's</span>
<span class="t" style="left:421.4px;top:883.0px;font-size:14.5px;letter-spacing:0.700px;color:#d2d2d2">settings.</span>
<span class="t" style="left:23.7px;top:956.0px;font-size:16px;letter-spacing:0.094px;color:#dcdcdc"><u>S</u>witch to Document View</span>
<span class="t" style="left:253.9px;top:956.0px;font-size:16px;transform:scaleX(0.9804);color:#848484"><u>R</u>ule Wizard...</span>
<span class="t" style="left:411.4px;top:956.0px;font-size:16px;transform:scaleX(0.9751);color:#dcdcdc"><u>P</u>riorities...</span>
<span class="t" style="left:541.4px;top:956.0px;font-size:16px;transform:scaleX(0.9831);color:#dcdcdc"><u>C</u>reate Default Rules</span>
<span class="t" style="left:939.9px;top:956.0px;font-size:16px;transform:scaleX(0.9297);color:#dcdcdc">OK</span>
<span class="t" style="left:1040.9px;top:956.0px;font-size:16px;transform:scaleX(0.9536);color:#dcdcdc">Cancel</span>
<span class="t" style="left:1159.9px;top:956.0px;font-size:16px;letter-spacing:0.367px;color:#dcdcdc">Apply</span>
</body></html>
